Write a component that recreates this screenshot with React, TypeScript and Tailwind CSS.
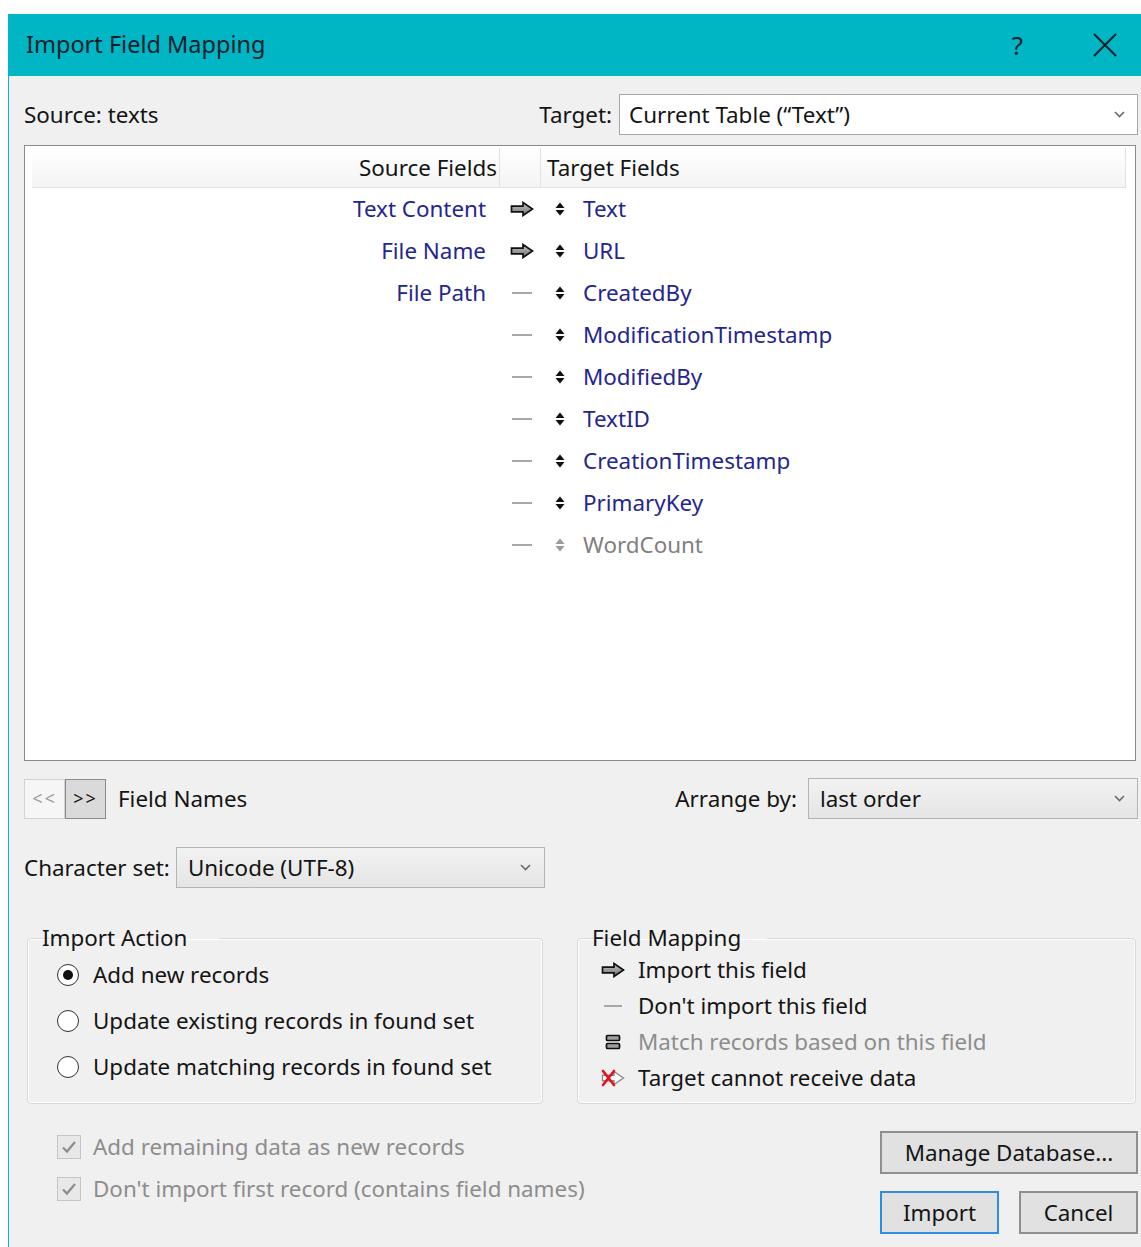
import React from "react";

type Mapping = "import" | "skip";

interface Row {
  source?: string;
  target: string;
  mapping: Mapping;
  disabled?: boolean;
}

const rows: Row[] = [
  { source: "Text Content", target: "Text", mapping: "import" },
  { source: "File Name", target: "URL", mapping: "import" },
  { source: "File Path", target: "CreatedBy", mapping: "skip" },
  { target: "ModificationTimestamp", mapping: "skip" },
  { target: "ModifiedBy", mapping: "skip" },
  { target: "TextID", mapping: "skip" },
  { target: "CreationTimestamp", mapping: "skip" },
  { target: "PrimaryKey", mapping: "skip" },
  { target: "WordCount", mapping: "skip", disabled: true },
];

function ImportArrow() {
  return (
    <svg width="24" height="16" viewBox="0 0 24 16">
      <defs>
        <linearGradient id="arrowFill" x1="0" y1="0" x2="0" y2="1">
          <stop offset="0" stopColor="#c8c8c8" />
          <stop offset="1" stopColor="#6e6e6e" />
        </linearGradient>
      </defs>
      <path
        d="M1.5 5.2 H13 V1.5 L22.5 8 L13 14.5 V10.8 H1.5 Z"
        fill="url(#arrowFill)"
        stroke="#111"
        strokeWidth="1.7"
        strokeLinejoin="miter"
      />
    </svg>
  );
}

function BlockedArrow() {
  return (
    <svg width="24" height="18" viewBox="0 0 24 18">
      <path
        d="M1.5 6.2 H13 V2.5 L22.5 9 L13 15.5 V11.8 H1.5 Z"
        fill="#fff"
        stroke="#8a8a8a"
        strokeWidth="1.4"
      />
      <path d="M2 2 L13 16 M13 2 L2 16" stroke="#e8101a" strokeWidth="2.6" strokeLinecap="round" />
    </svg>
  );
}

function MatchIcon() {
  return (
    <svg width="24" height="18" viewBox="0 0 24 18">
      <rect x="5.5" y="2.5" width="13" height="5" rx="1" fill="#a0a0a0" stroke="#111" strokeWidth="1.7" />
      <rect x="5.5" y="10.5" width="13" height="5" rx="1" fill="#a0a0a0" stroke="#111" strokeWidth="1.7" />
    </svg>
  );
}

function Dash({ w = 20 }: { w?: number }) {
  return <div className="h-[2px] bg-[#a8a8a8]" style={{ width: w }} />;
}

function UpDown({ muted }: { muted?: boolean }) {
  const c = muted ? "#9a9a9a" : "#111";
  return (
    <svg width="10" height="16" viewBox="0 0 10 16">
      <path d="M0.5 7 L5 1.5 L9.5 7 Z" fill={c} />
      <path d="M0.5 9 L5 14.5 L9.5 9 Z" fill={c} />
    </svg>
  );
}

function Chevron() {
  return (
    <svg width="11" height="7" viewBox="0 0 11 7">
      <path d="M1 1 L5.5 5.5 L10 1" fill="none" stroke="#6a6a6a" strokeWidth="1.6" />
    </svg>
  );
}

function Radio({ checked }: { checked?: boolean }) {
  return (
    <div className="w-[22px] h-[22px] rounded-full border-[1.5px] border-[#333] bg-white flex items-center justify-center shrink-0">
      {checked && <div className="w-[10px] h-[10px] rounded-full bg-[#111]" />}
    </div>
  );
}

function DisabledCheck() {
  return (
    <div className="w-[24px] h-[24px] border-[1.5px] border-[#c4c4c4] bg-[#e8e8e8] flex items-center justify-center shrink-0">
      <svg width="16" height="14" viewBox="0 0 16 14">
        <path d="M2 7.5 L6 11.5 L14 2" fill="none" stroke="#8c8c8c" strokeWidth="2.2" />
      </svg>
    </div>
  );
}

export default function App() {
  return (
    <div className="w-[1141px] h-[1247px] bg-white pt-[14px] pl-[8px] overflow-hidden font-['Noto_Sans',sans-serif] text-[22.4px] text-[#141414]">
      <div className="h-full flex flex-col">
        {/* title bar */}
        <div className="h-[62px] shrink-0 bg-[#00b5c4] flex items-center pl-[18px]">
          <span className="text-[23.5px] text-[#10202a]">Import Field Mapping</span>
          <div className="ml-auto flex items-center">
            <span className="text-[26px] text-[#10202a] mr-[70px]">?</span>
            <svg width="24" height="24" viewBox="0 0 24 24" className="mr-[24px]">
              <path d="M1 1 L23 23 M23 1 L1 23" stroke="#10202a" strokeWidth="2" />
            </svg>
          </div>
        </div>

        {/* dialog body */}
        <div className="flex-1 border-l border-[#00b5c4] bg-[#f0f0f0] pl-[15px] pr-[3px] flex flex-col">
          {/* source / target */}
          <div className="mt-[18px] h-[41px] flex items-center">
            <span>Source: texts</span>
            <span className="ml-auto mr-[7px]">Target:</span>
            <div className="w-[519px] h-[41px] bg-white border border-[#a6a6a6] flex items-center pl-[9px] pr-[12px]">
              <span>Current Table (“Text”)</span>
              <span className="ml-auto">
                <Chevron />
              </span>
            </div>
          </div>

          {/* mapping list */}
          <div className="mt-[10px] h-[616px] w-[1112px] border border-[#8a8a8a] bg-white pt-[2px] pl-[7px]">
            <div className="h-[40px] w-[1094px] flex bg-gradient-to-b from-white to-[#f4f4f4] border-b border-[#e2e2e2] border-r border-r-[#e2e2e2]">
              <div className="w-[468px] flex items-center justify-end pr-[2px] border-r border-[#e2e2e2]">
                Source Fields
              </div>
              <div className="w-[41px] border-r border-[#e2e2e2]" />
              <div className="flex items-center pl-[6px]">Target Fields</div>
            </div>
            {rows.map((r) => (
              <div key={r.target} className="h-[42px] flex items-center">
                <div className="w-[454px] text-right text-[#25258f]">{r.source ?? ""}</div>
                <div className="w-[24px] ml-[24px] flex items-center">
                  {r.mapping === "import" ? (
                    <ImportArrow />
                  ) : (
                    <div className="ml-[2px]">
                      <Dash />
                    </div>
                  )}
                </div>
                <div className="ml-[21px] w-[10px] flex items-center">
                  <UpDown muted={r.disabled} />
                </div>
                <div className={`ml-[18px] ${r.disabled ? "text-[#808080]" : "text-[#25258f]"}`}>{r.target}</div>
              </div>
            ))}
          </div>

          {/* field names / arrange */}
          <div className="mt-[17px] h-[41px] flex items-center">
            <div className="flex h-[40px]">
              <div className="w-[41px] h-[40px] border border-[#d2d2d2] bg-[#f6f6f6] text-[#9a9a9a] text-[18px] flex items-center justify-center tracking-[2px]">
                {"<<"}
              </div>
              <div className="w-[41px] h-[40px] border-[1.5px] border-[#8c8c8c] bg-[#dadada] text-[#111] text-[18px] flex items-center justify-center tracking-[2px]">
                {">>"}
              </div>
            </div>
            <span className="ml-[12px]">Field Names</span>
            <span className="ml-auto mr-[11px]">Arrange by:</span>
            <div className="w-[330px] h-[41px] bg-gradient-to-b from-[#f2f2f2] to-[#e5e5e5] border border-[#b4b4b4] flex items-center pl-[11px] pr-[12px]">
              <span>last order</span>
              <span className="ml-auto">
                <Chevron />
              </span>
            </div>
          </div>

          {/* character set */}
          <div className="mt-[28px] h-[41px] flex items-center">
            <span>Character set:</span>
            <div className="ml-[6px] w-[369px] h-[41px] bg-gradient-to-b from-[#f2f2f2] to-[#e5e5e5] border border-[#b4b4b4] flex items-center pl-[11px] pr-[13px]">
              <span>Unicode (UTF-8)</span>
              <span className="ml-auto">
                <Chevron />
              </span>
            </div>
          </div>

          {/* option groups */}
          <div className="mt-[36px] flex">
            <fieldset className="ml-[3px] w-[516px] h-[180px] border border-[#d8d8d8] rounded-[4px] shadow-[inset_0_0_0_1px_#ffffff] pl-[29px]">
              <legend className="ml-[11px] px-[3px] -translate-x-[29px] leading-[28px]">Import Action</legend>
              {[
                ["Add new records", true],
                ["Update existing records in found set", false],
                ["Update matching records in found set", false],
              ].map(([label, on]) => (
                <div key={label as string} className="h-[46px] flex items-center">
                  <Radio checked={on as boolean} />
                  <span className="ml-[14px]">{label as string}</span>
                </div>
              ))}
            </fieldset>

            <fieldset className="ml-[34px] w-[559px] h-[180px] border border-[#d8d8d8] rounded-[4px] shadow-[inset_0_0_0_1px_#ffffff] pl-[23px]">
              <legend className="ml-[11px] px-[3px] -translate-x-[23px] leading-[28px]">Field Mapping</legend>
              <div className="h-[36px] flex items-center">
                <div className="w-[24px] flex items-center">
                  <ImportArrow />
                </div>
                <span className="ml-[13px]">Import this field</span>
              </div>
              <div className="h-[36px] flex items-center">
                <div className="w-[24px] flex items-center justify-center">
                  <Dash w={18} />
                </div>
                <span className="ml-[13px]">Don't import this field</span>
              </div>
              <div className="h-[36px] flex items-center">
                <div className="w-[24px] flex items-center">
                  <MatchIcon />
                </div>
                <span className="ml-[13px] text-[#8d8d8d]">Match records based on this field</span>
              </div>
              <div className="h-[36px] flex items-center">
                <div className="w-[24px] flex items-center">
                  <BlockedArrow />
                </div>
                <span className="ml-[13px]">Target cannot receive data</span>
              </div>
            </fieldset>
          </div>

          {/* options and buttons */}
          <div className="mt-[22px] flex">
            <div className="pl-[33px] flex flex-col text-[#8d8d8d]">
              <div className="h-[42px] flex items-center">
                <DisabledCheck />
                <span className="ml-[12px]">Add remaining data as new records</span>
              </div>
              <div className="h-[42px] flex items-center">
                <DisabledCheck />
                <span className="ml-[12px]">Don't import first record (contains field names)</span>
              </div>
            </div>
            <div className="ml-auto mt-[5px] w-[258px] flex flex-col">
              <div className="h-[43px] border-2 border-[#8f8f8f] bg-[#e1e1e1] flex items-center justify-center">
                Manage Database...
              </div>
              <div className="mt-[17px] flex justify-between">
                <div className="w-[119px] h-[43px] border-2 border-[#2f8ce0] bg-[#e1e1e1] flex items-center justify-center">
                  Import
                </div>
                <div className="w-[119px] h-[43px] border-2 border-[#8f8f8f] bg-[#e1e1e1] flex items-center justify-center">
                  Cancel
                </div>
              </div>
            </div>
          </div>
        </div>
      </div>
    </div>
  );
}
